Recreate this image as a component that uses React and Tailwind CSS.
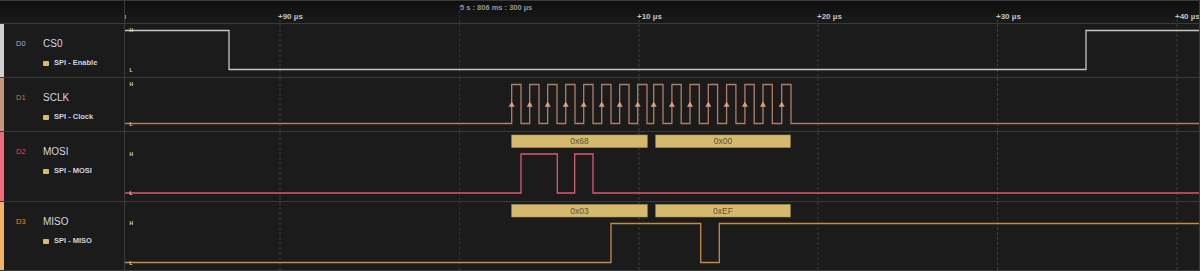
import React from 'react';

// wave area starts at x=125 in page coordinates
const X0 = 125;
const X1 = 1199;
const GRID = [280, 639, 818, 997.5, 1177];
const STAMP_X = 459.5;

const clockRises = [
  511.7, 529.7, 547.7, 565.7, 583.7, 601.7, 619.7, 637.7,
  653.7, 671.9, 690, 708.3, 726.6, 744.9, 763, 781.7,
];

const stepPath = (edges, hi, lo, startHigh = false) => {
  let level = startHigh;
  let d = `M${X0},${level ? hi : lo}`;
  edges.forEach((x) => {
    level = !level;
    d += ` H${x} V${level ? hi : lo}`;
  });
  return d + ` H${X1}`;
};

const clockEdges = clockRises.flatMap((r) => [r, r + 9.3]);

const channels = [
  {
    id: 'D0',
    name: 'CS0',
    sub: 'SPI - Enable',
    bar: 'bg-[#d0d0d0]',
    idColor: 'text-[#a8b0c4]',
    height: 'h-[54px]',
    h: 53,
    hi: 6.5,
    lo: 45.5,
    color: '#c6c6c6',
    path: stepPath([229, 1086], 6.5, 45.5, true),
  },
  {
    id: 'D1',
    name: 'SCLK',
    sub: 'SPI - Clock',
    bar: 'bg-[#c4977c]',
    idColor: 'text-[#b07a5c]',
    height: 'h-[54px]',
    h: 53,
    hi: 6.5,
    lo: 45.5,
    color: '#b07e64',
    path: stepPath(clockEdges, 6.5, 45.5),
    arrows: true,
  },
  {
    id: 'D2',
    name: 'MOSI',
    sub: 'SPI - MOSI',
    bar: 'bg-[#f06a7a]',
    idColor: 'text-[#e0465c]',
    height: 'h-[70px]',
    h: 69,
    hi: 22,
    lo: 61,
    color: '#dc5a70',
    path: stepPath([521, 557.3, 574.7, 593], 22, 61),
    bytes: ['0x68', '0x00'],
  },
  {
    id: 'D3',
    name: 'MISO',
    sub: 'SPI - MISO',
    bar: 'bg-[#f2b264]',
    idColor: 'text-[#e08a32]',
    height: 'h-[69px]',
    h: 68,
    hi: 21.5,
    lo: 60.5,
    color: '#c48a4a',
    path: stepPath([611, 700.7, 719.3], 21.5, 60.5),
    bytes: ['0x03', '0xEF'],
  },
];

const byteBoxes = [
  [511.7, 647.3],
  [655.7, 790.3],
];

const GridLines = ({ y1, y2 }) => (
  <g>
    <line x1={STAMP_X} x2={STAMP_X} y1={y1} y2={y2} stroke="#2e2e2e" strokeDasharray="3 2" />
    {GRID.map((x) => (
      <line key={x} x1={x} x2={x} y1={y1} y2={y2} stroke="#3c3c3c" strokeDasharray="3 2" />
    ))}
  </g>
);

const Wave = ({ ch }) => (
  <svg
    className="block"
    width={X1 - X0}
    height={ch.h}
    viewBox={`${X0} 0 ${X1 - X0} ${ch.h}`}
  >
    <GridLines y1={0} y2={ch.h} />
    {ch.bytes &&
      byteBoxes.map(([a, b], i) => (
        <g key={i}>
          <rect x={a} y={ch.hi - 19} width={b - a} height={12.5} fill="#d5b96e" stroke="#a88f52" strokeWidth="0.6" />
          <text
            x={(a + b) / 2}
            y={ch.hi - 9.8}
            textAnchor="middle"
            fontSize="8.5"
            fill="#5e4f36"
            fontFamily="Liberation Sans, sans-serif"
          >
            {ch.bytes[i]}
          </text>
        </g>
      ))}
    <path d={ch.path} fill="none" stroke={ch.color} strokeWidth="1.3" />
    {ch.arrows &&
      clockRises.map((x) => (
        <polygon key={x} points={`${x},23.5 ${x - 3},28.8 ${x + 3},28.8`} fill="#dc9c7a" />
      ))}
    <text x={129.5} y={ch.hi + 1.8} fontSize="5" fontWeight="bold" fill="#d8d8d8" fontFamily="Liberation Sans, sans-serif">
      H
    </text>
    <text x={129.5} y={ch.lo + 2} fontSize="5" fontWeight="bold" fill="#d8d8d8" fontFamily="Liberation Sans, sans-serif">
      L
    </text>
  </svg>
);

const Header = () => (
  <div className="flex h-[23px] shrink-0 border-b border-[#3a3a3a] bg-linear-to-b from-[#0f0f0f] to-[#1a1a1a]">
    <div className="w-[125px] shrink-0 border-r border-[#3a3a3a]" />
    <div className="relative flex-1 overflow-hidden">
      <svg className="absolute left-0 top-0 block" width={X1 - X0} height={22} viewBox={`${X0} 0 ${X1 - X0} 22`}>
        <line x1={STAMP_X} x2={STAMP_X} y1={4} y2={22} stroke="#2e2e2e" strokeDasharray="3 2" />
        {GRID.map((x) => (
          <line key={x} x1={x} x2={x} y1={19} y2={22} stroke="#444" strokeDasharray="2 1" />
        ))}
        <line x1={125.5} x2={125.5} y1={14} y2={18} stroke="#888" />
      </svg>
      <span className="absolute left-[335px] top-[2px] whitespace-nowrap text-[7.5px] leading-[10px] font-bold text-[#959595]">
        5 s : 806 ms : 300 µs
      </span>
      {[
        ['+90 µs', 'left-[153px]'],
        ['+10 µs', 'left-[512px]'],
        ['+20 µs', 'left-[692px]'],
        ['+30 µs', 'left-[871px]'],
        ['+40 µs', 'left-[1050px]'],
      ].map(([t, cls]) => (
        <span key={t} className={`absolute top-[11px] whitespace-nowrap text-[8px] leading-[10px] font-bold text-[#c4c4c4] ${cls}`}>
          {t}
        </span>
      ))}
    </div>
  </div>
);

const ChannelRow = ({ ch }) => (
  <div className={`flex shrink-0 border-b border-[#3a3a3a] ${ch.height}`}>
    <div className="flex w-[125px] shrink-0 border-r border-[#3a3a3a]">
      <div className={`w-[4px] shrink-0 ${ch.bar}`} />
      <div className="grid grid-cols-[27px_1fr] content-start gap-y-[9px] pl-[12px] pt-[15px]">
        <span className={`text-[7.5px] leading-[10px] ${ch.idColor}`}>{ch.id}</span>
        <span className="text-[10px] leading-[10px] text-[#d0d7e4]">{ch.name}</span>
        <span />
        <div className="flex items-center gap-[5px]">
          <span className="h-[5px] w-[6px] rounded-[1px] bg-[#d8ba6a]" />
          <span className="whitespace-nowrap text-[7.5px] leading-[10px] font-bold text-[#cdd4e2]">{ch.sub}</span>
        </div>
      </div>
    </div>
    <div className="flex-1 overflow-hidden">
      <Wave ch={ch} />
    </div>
  </div>
);

export default function App() {
  return (
    <div className="flex h-[271px] w-[1200px] flex-col overflow-hidden border-t border-r border-[#3a3a3a] bg-[#1b1b1b] font-['Liberation_Sans',sans-serif]">
      <Header />
      {channels.map((ch) => (
        <ChannelRow key={ch.id} ch={ch} />
      ))}
    </div>
  );
}
